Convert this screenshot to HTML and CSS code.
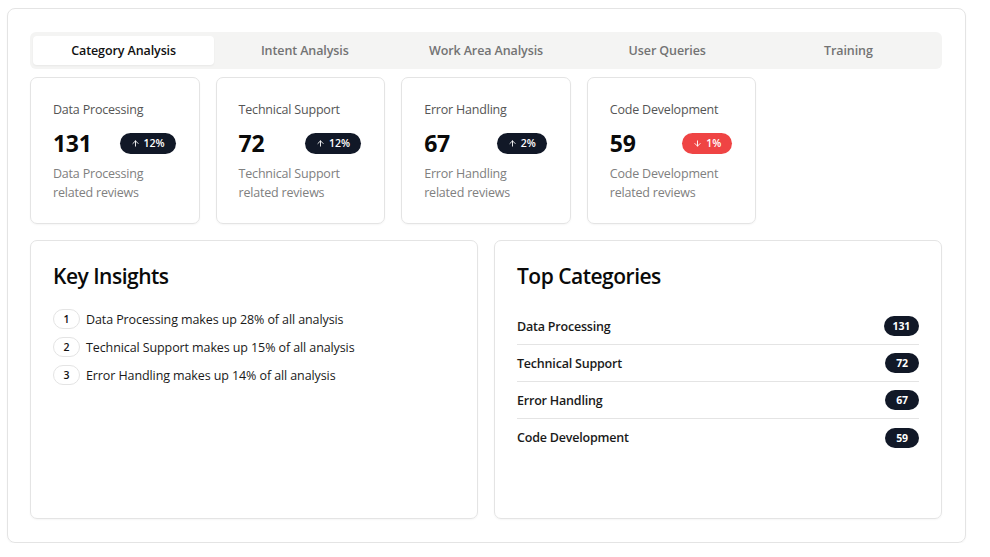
FILE: index.html
```html
<!DOCTYPE html>
<html>
<head>
<meta charset="utf-8">
<link rel="stylesheet" href="styles.css">
</head>
<body>
<div class="panel">
  <div class="tabs">
    <div class="tab active">Category Analysis</div>
    <div class="tab">Intent Analysis</div>
    <div class="tab">Work Area Analysis</div>
    <div class="tab">User Queries</div>
    <div class="tab">Training</div>
  </div>

  <div class="stats">
    <div class="stat">
      <div class="stat-title">Data Processing</div>
      <div class="stat-row">
        <span class="stat-num">131</span>
        <span class="trend up"><svg viewBox="0 0 24 24" class="arrow"><path d="M12 19V5M5 12l7-7 7 7"/></svg>12%</span>
      </div>
      <div class="stat-desc">Data Processing related reviews</div>
    </div>
    <div class="stat">
      <div class="stat-title">Technical Support</div>
      <div class="stat-row">
        <span class="stat-num">72</span>
        <span class="trend up"><svg viewBox="0 0 24 24" class="arrow"><path d="M12 19V5M5 12l7-7 7 7"/></svg>12%</span>
      </div>
      <div class="stat-desc">Technical Support related reviews</div>
    </div>
    <div class="stat">
      <div class="stat-title">Error Handling</div>
      <div class="stat-row">
        <span class="stat-num">67</span>
        <span class="trend up"><svg viewBox="0 0 24 24" class="arrow"><path d="M12 19V5M5 12l7-7 7 7"/></svg>2%</span>
      </div>
      <div class="stat-desc">Error Handling related reviews</div>
    </div>
    <div class="stat">
      <div class="stat-title">Code Development</div>
      <div class="stat-row">
        <span class="stat-num">59</span>
        <span class="trend down"><svg viewBox="0 0 24 24" class="arrow"><path d="M12 5v14M19 12l-7 7-7-7"/></svg>1%</span>
      </div>
      <div class="stat-desc">Code Development related reviews</div>
    </div>
  </div>

  <div class="bottom">
    <div class="box">
      <h2 class="box-title">Key Insights</h2>
      <ul class="insights">
        <li><span class="num">1</span><span>Data Processing makes up 28% of all analysis</span></li>
        <li><span class="num">2</span><span>Technical Support makes up 15% of all analysis</span></li>
        <li><span class="num">3</span><span>Error Handling makes up 14% of all analysis</span></li>
      </ul>
    </div>
    <div class="box">
      <h2 class="box-title">Top Categories</h2>
      <ul class="cats">
        <li><span>Data Processing</span><span class="count">131</span></li>
        <li><span>Technical Support</span><span class="count">72</span></li>
        <li><span>Error Handling</span><span class="count">67</span></li>
        <li><span>Code Development</span><span class="count">59</span></li>
      </ul>
    </div>
  </div>
</div>
</body>
</html>
```

FILE: styles.css
```css
* { box-sizing: border-box; }
html, body { margin: 0; padding: 0; background: #fff; }
body {
  font-family: "Open Sans", "Noto Sans", Arial, sans-serif;
  color: #111;
  padding: 8px 0 0 7px;
}
.panel {
  width: 959px;
  height: 535px;
  border: 1px solid #e4e4e4;
  border-radius: 8px;
  padding: 23px 23px 22px 22px;
  box-shadow: 0 1px 2px rgba(0,0,0,0.04);
}
.tabs {
  display: grid;
  grid-template-columns: repeat(5, 1fr);
  background: #f4f4f3;
  border-radius: 6px;
  padding: 4px 3px;
  height: 37px;
}
.tab {
  display: flex;
  align-items: center;
  justify-content: center;
  font-size: 12.5px;
  font-weight: 600;
  color: #737373;
  border-radius: 4px;
  letter-spacing: -0.1px;
}
.tab.active {
  background: #fff;
  color: #111;
  box-shadow: 0 1px 2px rgba(0,0,0,0.05);
}
.stats {
  display: grid;
  grid-template-columns: repeat(5, 1fr);
  gap: 16px;
  margin-top: 8px;
}
.stat {
  border: 1px solid #e4e4e4;
  border-radius: 7px;
  padding: 23px 23px 22px 22px;
  height: 147px;
  box-shadow: 0 1px 2px rgba(0,0,0,0.04);
}
.stat-title {
  font-size: 12.5px;
  line-height: 18px;
  color: #555;
  letter-spacing: -0.2px;
}
.stat-row {
  display: flex;
  align-items: center;
  justify-content: space-between;
  margin-top: 8px;
  height: 32px;
}
.stat-num {
  font-size: 23px;
  font-weight: 700;
  color: #0a0a0a;
  letter-spacing: -0.3px;
}
.trend {
  display: inline-flex;
  align-items: center;
  gap: 4px;
  height: 21px;
  padding: 0 11px;
  border-radius: 11px;
  font-size: 10.5px;
  font-weight: 600;
  color: #fff;
}
.trend.up { background: #111827; }
.trend.down { background: #ef4444; }
.arrow {
  width: 9px;
  height: 9px;
  fill: none;
  stroke: #fff;
  stroke-width: 2.4;
  stroke-linecap: round;
  stroke-linejoin: round;
}
.stat-desc {
  margin-top: 5px;
  font-size: 12.5px;
  line-height: 19px;
  color: #808080;
  letter-spacing: -0.2px;
}
.bottom {
  display: grid;
  grid-template-columns: 1fr 1fr;
  gap: 16px;
  margin-top: 16px;
}
.box {
  border: 1px solid #e4e4e4;
  border-radius: 7px;
  height: 279px;
  padding: 23px 22px 23px 22px;
  box-shadow: 0 1px 2px rgba(0,0,0,0.04);
}
.box-title {
  margin: 0;
  font-size: 21px;
  line-height: 24px;
  font-weight: 600;
  color: #0a0a0a;
  letter-spacing: -0.5px;
}
.insights {
  list-style: none;
  margin: 21px 0 0 0;
  padding: 0;
  display: flex;
  flex-direction: column;
  gap: 8px;
}
.insights li {
  display: flex;
  align-items: center;
  gap: 6px;
  font-size: 12.5px;
  color: #1a1a1a;
  letter-spacing: -0.1px;
  height: 20px;
}
.num {
  display: inline-flex;
  align-items: center;
  justify-content: center;
  width: 27px;
  height: 20px;
  border: 1px solid #e4e4e4;
  border-radius: 10px;
  font-size: 10.5px;
  font-weight: 600;
  color: #111;
}
.cats {
  list-style: none;
  margin: 20px 0 0 0;
  padding: 0;
}
.cats li {
  display: flex;
  align-items: center;
  justify-content: space-between;
  height: 37px;
  border-bottom: 1px solid #e4e4e4;
  font-size: 12.5px;
  font-weight: 600;
  color: #1a1a1a;
  letter-spacing: -0.2px;
}
.cats li:last-child { border-bottom: none; }
.count {
  display: inline-flex;
  align-items: center;
  justify-content: center;
  height: 20px;
  min-width: 34px;
  padding: 0 9px;
  border-radius: 10px;
  background: #111827;
  color: #fff;
  font-size: 10.5px;
  font-weight: 700;
}
```
